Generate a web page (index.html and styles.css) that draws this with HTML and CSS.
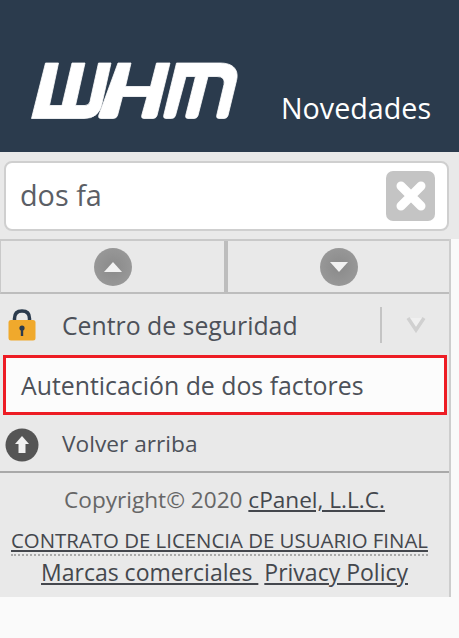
FILE: index.html

```html
<!DOCTYPE html>
<html lang="es">
<head>
    <meta charset="UTF-8">
    <meta name="viewport" content="width=device-width, initial-scale=1.0">
    <title>WHM</title>
    <link rel="stylesheet" href="styles.css">
</head>
<body>
    <div class="header">
        <svg class="logo" width="207" height="58" viewBox="31 61.5 207 58" aria-label="WHM">
            <path d="M45.5 62.5 L58.5 62.5 L49.5 105 L62 105 L72 62.5 L85 62.5 L75.5 105 L85 105 Q89 105 90 101 L98.5 62.5 L111 62.5 L102 103 Q99 118 84 118 L31.5 118 Z"/>
            <path d="M118 62.5 L131 62.5 L125.5 86 L150.5 86 L156.5 62.5 L170 62.5 L157 115 Q156 118 153 118 L144 118 Q141 118 141.7 115 L147 96 L122.5 96 L117.5 115 Q116.5 118 113 118 L101 118 Q98 118 98.7 115 Z"/>
            <path d="M176.5 62.5 L220 62.5 C234 62.5 239 70 236.5 80 L228 115 Q227 118 224 118 L219 118 Q216 118 216.7 115 L224 84 Q225.5 76 217 76 L208 76 L198 115 Q197 118 194 118 L188 118 Q185 118 185.7 115 L195.5 76 L186 76 L175.5 115 Q174.5 118 171.5 118 L166 118 Q163 118 163.7 115 Z"/>
        </svg>
        <a class="news" href="#">Novedades</a>
    </div>

    <div class="sidebar">
        <div class="search-area">
            <div class="search">
                <input class="search-input" type="text" value="dos fa">
                <div class="clear-btn">
                    <svg width="30" height="30" viewBox="0 0 30 30">
                        <path class="clear-x" d="M5 5 L25 25 M25 5 L5 25"/>
                    </svg>
                </div>
            </div>
        </div>

        <div class="menu">
            <div class="scroll-row">
                <div class="scroll-cell">
                    <span class="scroll-btn">
                        <svg width="20" height="12" viewBox="0 0 20 12"><path class="arrow-fill" d="M10 1 L19 11 L1 11 Z"/></svg>
                    </span>
                </div>
                <div class="scroll-cell">
                    <span class="scroll-btn">
                        <svg width="20" height="12" viewBox="0 0 20 12"><path class="arrow-fill" d="M1 1 L19 1 L10 11 Z"/></svg>
                    </span>
                </div>
            </div>

            <div class="category">
                <svg class="lock" width="28" height="32" viewBox="0 0 28 32">
                    <path class="lock-bow" d="M6.5 13 L6.5 9.5 Q6.5 2 14 2 Q21.5 2 21.5 9.5 L21.5 13"/>
                    <rect class="lock-body" x="0.5" y="11" width="27" height="20.5" rx="2.5"/>
                    <circle class="lock-hole" cx="14" cy="19" r="2.6"/>
                    <rect class="lock-hole" x="12.8" y="19" width="2.4" height="8"/>
                </svg>
                <span class="category-name">Centro de seguridad</span>
                <span class="category-toggle">
                    <svg class="chevron" width="20" height="16" viewBox="0 0 20 16"><path d="M2 1 L10 13 L18 1"/></svg>
                </span>
            </div>

            <a class="result" href="#">Autenticación de dos factores</a>

            <div class="back-top">
                <svg class="up-icon" width="34" height="34" viewBox="0 0 34 34">
                    <circle cx="17" cy="17" r="16.5"/>
                    <path class="up-arrow" d="M17 8 L24 16 L20.5 16 L20.5 25 L13.5 25 L13.5 16 L10 16 Z"/>
                </svg>
                <span>Volver arriba</span>
            </div>

            <div class="footer">
                <p class="copyright">Copyright© 2020 <a href="#">cPanel, L.L.C.</a></p>
                <p class="eula"><a href="#">CONTRATO DE LICENCIA DE USUARIO FINAL</a></p>
                <p class="legal"><a href="#">Marcas comerciales&nbsp;</a> <a href="#">Privacy Policy</a></p>
            </div>
        </div>
    </div>
</body>
</html>
```

FILE: styles.css

```css
body {
    margin: 0;
    background: #fafafa;
    font-family: "Open Sans", sans-serif;
    color: #4d5159;
}
a {
    color: #44474d;
}
.header {
    display: flex;
    align-items: flex-end;
    height: 152px;
    box-sizing: border-box;
    padding: 0 0 26px 31px;
    background: #2b3b4d;
}
.logo {
    display: block;
    margin-bottom: 6px;
}
.logo path {
    fill: #fff;
    stroke: #fff;
    stroke-width: 0.8;
    stroke-linejoin: round;
}
.news {
    margin-left: 43px;
    font-size: 28.7px;
    line-height: 36px;
    color: #fff;
    text-decoration: none;
}
.search-area {
    height: 87px;
    box-sizing: border-box;
    padding: 9px 10px 0 4px;
    background: #e9e9e9;
}
.search {
    display: flex;
    align-items: center;
    justify-content: space-between;
    height: 70px;
    box-sizing: border-box;
    padding: 0 12px 0 14px;
    background: #fff;
    border: 2px solid #cfcfcf;
    border-radius: 8px;
}
.search-input {
    flex: 1;
    min-width: 0;
    padding: 0 0 3px;
    border: none;
    outline: none;
    background: none;
    font-family: inherit;
    font-size: 28.8px;
    color: #5c5f66;
}
.clear-btn {
    display: flex;
    align-items: center;
    justify-content: center;
    width: 49px;
    height: 50px;
    background: #c4c4c4;
    border-radius: 7px;
}
.clear-x {
    fill: none;
    stroke: #fff;
    stroke-width: 9;
    stroke-linecap: round;
}
.clear-btn svg {
    filter: blur(0.6px);
}
.menu {
    width: 451px;
    box-sizing: border-box;
    background: #e9e9e9;
    border-right: 2px solid #cdcdcd;
}
.scroll-row {
    display: flex;
    height: 55px;
    box-sizing: border-box;
    border-top: 2px solid #c9c9c9;
    border-bottom: 2px solid #bdbdbd;
    border-left: 1px solid #c9c9c9;
}
.scroll-cell {
    flex: 1;
    display: flex;
    align-items: center;
    justify-content: center;
}
.scroll-cell:first-child {
    flex: none;
    width: 227px;
    box-sizing: border-box;
    border-right: 4px solid #bdbdbd;
}
.scroll-btn {
    display: flex;
    align-items: center;
    justify-content: center;
    width: 38px;
    height: 38px;
    border-radius: 50%;
    background: radial-gradient(circle, #8a8a8a 0%, #9d9d9d 100%);
    filter: blur(0.4px);
}
.arrow-fill {
    fill: #f2f2f2;
}
.category {
    display: flex;
    align-items: center;
    height: 61px;
    box-sizing: border-box;
    padding-left: 8px;
    font-size: 24.8px;
}
.lock-bow {
    fill: none;
    stroke: #2b3b4d;
    stroke-width: 3.5;
}
.lock-body {
    fill: #f0a92c;
}
.lock-hole {
    fill: #2b3b4d;
}
.category-name {
    margin-left: 26px;
}
.category-toggle {
    display: flex;
    align-items: center;
    justify-content: center;
    width: 69px;
    height: 36px;
    margin-left: auto;
    box-sizing: border-box;
    border-left: 2px solid #c4c4c4;
}
.chevron {
    filter: blur(0.6px);
}
.chevron path {
    fill: #f0f0f0;
    stroke: #d0d0d0;
    stroke-width: 3.5;
}
.result {
    display: block;
    width: 444px;
    height: 60px;
    margin-left: 3px;
    box-sizing: border-box;
    padding-left: 15px;
    border: 3px solid #ed1c24;
    background: #fcfcfc;
    font-size: 24.85px;
    line-height: 54px;
    color: #4d5159;
    text-decoration: none;
}
.back-top {
    display: flex;
    align-items: center;
    height: 58px;
    box-sizing: border-box;
    padding-left: 5px;
    border-bottom: 2px solid #a9a9a9;
    font-size: 22.7px;
}
.back-top span {
    margin-left: 23px;
}
.up-icon {
    margin-top: 3px;
    filter: blur(0.5px);
}
.up-icon circle {
    fill: #555;
}
.up-arrow {
    fill: #f2f2f2;
}
.footer {
    height: 124px;
    box-sizing: border-box;
    padding-top: 12px;
    text-align: center;
    overflow: hidden;
}
.footer p {
    margin: 0;
}
.copyright {
    font-size: 22.6px;
    line-height: 30px;
    color: #666;
}
.footer .eula {
    width: 417px;
    margin: 12px 0 0 11px;
    padding-bottom: 1px;
    border-bottom: 2px dotted #aaa;
    font-size: 20.4px;
    line-height: 26px;
    white-space: nowrap;
}
.legal {
    font-size: 23px;
    line-height: 32px;
}
```
